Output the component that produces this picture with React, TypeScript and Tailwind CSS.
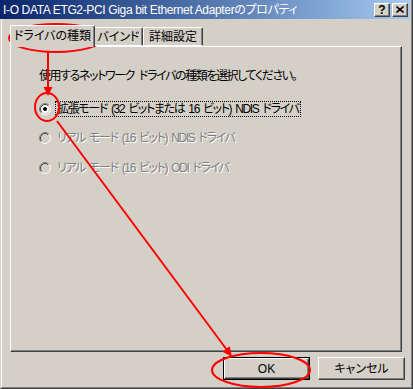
import React from "react";

const FONT = "[font-family:'Liberation_Sans','Noto_Sans_CJK_JP',sans-serif]";

const Radio = ({ checked, disabled }: { checked?: boolean; disabled?: boolean }) => (
  <svg width="12" height="12" viewBox="0 0 12 12" className="shrink-0">
    <circle cx="6" cy="6" r="4.2" fill={disabled ? "#d4d0c8" : "#ffffff"} />
    <path d="M2.11 9.89 A5.5 5.5 0 0 1 9.89 2.11" stroke="#808080" strokeWidth="1" fill="none" />
    <path d="M9.89 2.11 A5.5 5.5 0 0 1 2.11 9.89" stroke="#ffffff" strokeWidth="1" fill="none" />
    <path d="M2.82 9.18 A4.5 4.5 0 0 1 9.18 2.82" stroke="#404040" strokeWidth="1" fill="none" />
    <path d="M9.18 2.82 A4.5 4.5 0 0 1 2.82 9.18" stroke="#d4d0c8" strokeWidth="1" fill="none" />
    {checked && <circle cx="6" cy="6" r="2" fill="#000000" />}
  </svg>
);

const Disabled = ({ children }: { children: React.ReactNode }) => (
  <span className="text-[#808080] [text-shadow:1px_1px_0_#ffffff]">{children}</span>
);

export default function App() {
  return (
    <div className={`relative w-[413px] h-[389px] bg-[#d4d0c8] overflow-hidden text-[12px] leading-[14px] text-black ${FONT} [font-feature-settings:'palt']`}>
      {/* window frame */}
      <div className="flex flex-col w-full h-full border-l-[1px] border-l-[#d4d0c8] border-r-[1px] border-r-[#404040] border-b-[1px] border-b-[#404040]">
        <div className="flex flex-col flex-1 border-l border-l-white border-r border-r-[#808080] border-b border-b-[#808080]">
          {/* title bar */}
          <div className="h-[19px] -ml-[2px] mr-[1px] flex items-center bg-gradient-to-r from-[#0a246a] to-[#a6caf0] pl-[3px] pr-[2px]">
            <div className="flex-1 text-white text-[12px] whitespace-nowrap tracking-[-0.35px]">
              I-O DATA ETG2-PCI Giga bit Ethernet Adapterのプロパティ
            </div>
            <div className="flex items-center">
              <div className="w-[16px] h-[14px] bg-[#d4d0c8] border-t border-l border-t-white border-l-white border-r border-b border-r-[#404040] border-b-[#404040] shadow-[inset_-1px_-1px_0_#808080] flex items-center justify-center font-bold text-[12px] leading-none">
                ?
              </div>
              <div className="ml-[2px] w-[16px] h-[14px] bg-[#d4d0c8] border-t border-l border-t-white border-l-white border-r border-b border-r-[#404040] border-b-[#404040] shadow-[inset_-1px_-1px_0_#808080] flex items-center justify-center">
                <svg width="8" height="7" viewBox="0 0 8 7">
                  <path d="M0.5 0.5 L7.5 6.5 M7.5 0.5 L0.5 6.5" stroke="#000" strokeWidth="1.6" />
                </svg>
              </div>
            </div>
          </div>

          {/* body */}
          <div className="flex flex-col flex-1 pl-[8px] pr-[7px] pt-[6px]">
            {/* tabs */}
            <div className="flex items-end h-[22px] relative z-10 -mb-[1px]">
              <div className="w-[85px] h-[22px] bg-[#d4d0c8] border-t border-l border-t-white border-l-white border-r border-r-[#404040] rounded-t-[2px] shadow-[inset_-1px_0_0_#808080] flex items-center justify-center pb-[1px]">
                ドライバの種類
              </div>
              <div className="w-[48px] h-[19px] bg-[#d4d0c8] border-t border-t-white border-r border-r-[#404040] rounded-tr-[2px] shadow-[inset_-1px_0_0_#808080] flex items-center justify-center mb-[1px] border-b border-b-white">
                バインド
              </div>
              <div className="w-[60px] h-[19px] bg-[#d4d0c8] border-t border-l border-t-white border-l-white border-r border-r-[#404040] rounded-t-[2px] shadow-[inset_-1px_0_0_#808080] flex items-center justify-center mb-[1px] border-b border-b-white">
                詳細設定
              </div>
            </div>
            {/* panel */}
            <div className="w-[392px] h-[306px] border-t border-l border-t-white border-l-white border-r border-b border-r-[#404040] border-b-[#404040] shadow-[inset_-1px_-1px_0_#808080] pl-[28px] pt-[22px] flex flex-col">
              <div className="h-[14px] whitespace-nowrap tracking-[-1.4px] [word-spacing:3px]">
                使用するネットワーク ドライバの種類を選択してください。
              </div>
              <div className="mt-[18px] h-[16px] flex items-center">
                <Radio checked />
                <div className="ml-[4px] h-[16px] px-[1px] border border-dotted border-black flex items-center whitespace-nowrap tracking-[-1.35px] [word-spacing:2px]">
                  拡張モード (32 ビットまたは 16 ビット) NDIS ドライバ
                </div>
              </div>
              <div className="mt-[13px] h-[16px] flex items-center">
                <Radio disabled />
                <div className="ml-[5px] whitespace-nowrap tracking-[-1.35px] [word-spacing:2px] px-[1px]">
                  <Disabled>リアル モード (16 ビット) NDIS ドライバ</Disabled>
                </div>
              </div>
              <div className="mt-[14px] h-[16px] flex items-center">
                <Radio disabled />
                <div className="ml-[5px] whitespace-nowrap tracking-[-1.35px] [word-spacing:2px] px-[1px]">
                  <Disabled>リアル モード (16 ビット) ODI ドライバ</Disabled>
                </div>
              </div>
            </div>
            {/* buttons */}
            <div className="flex justify-end gap-[8px] mt-[5px] -mr-[1px]">
              <div className="w-[87px] h-[23px] border border-black">
                <div className="w-full h-full border-t border-l border-t-white border-l-white border-r border-b border-r-[#404040] border-b-[#404040] shadow-[inset_-1px_-1px_0_#808080] flex items-center justify-center">
                  OK
                </div>
              </div>
              <div className="w-[87px] h-[23px] border-t border-l border-t-white border-l-white border-r border-b border-r-[#404040] border-b-[#404040] shadow-[inset_-1px_-1px_0_#808080] flex items-center justify-center">
                キャンセル
              </div>
            </div>
          </div>
        </div>
      </div>

      {/* red annotations */}
      <svg className="absolute inset-0 pointer-events-none" width="413" height="389" viewBox="0 0 413 389">
        <g stroke="#ff0000" strokeWidth="2" fill="none">
          <ellipse cx="56" cy="38" rx="47" ry="14" />
          <line x1="48" y1="52" x2="48" y2="88" />
          <ellipse cx="47" cy="107" rx="12" ry="14" />
          <line x1="57" y1="121" x2="227" y2="350" />
          <ellipse cx="261" cy="370" rx="49" ry="17" />
        </g>
        <g fill="#ff0000">
          <polygon points="48,96 43.5,87 52.5,87" />
          <polygon points="232,357 222.5,351.7 229.7,346.3" />
        </g>
      </svg>
    </div>
  );
}
